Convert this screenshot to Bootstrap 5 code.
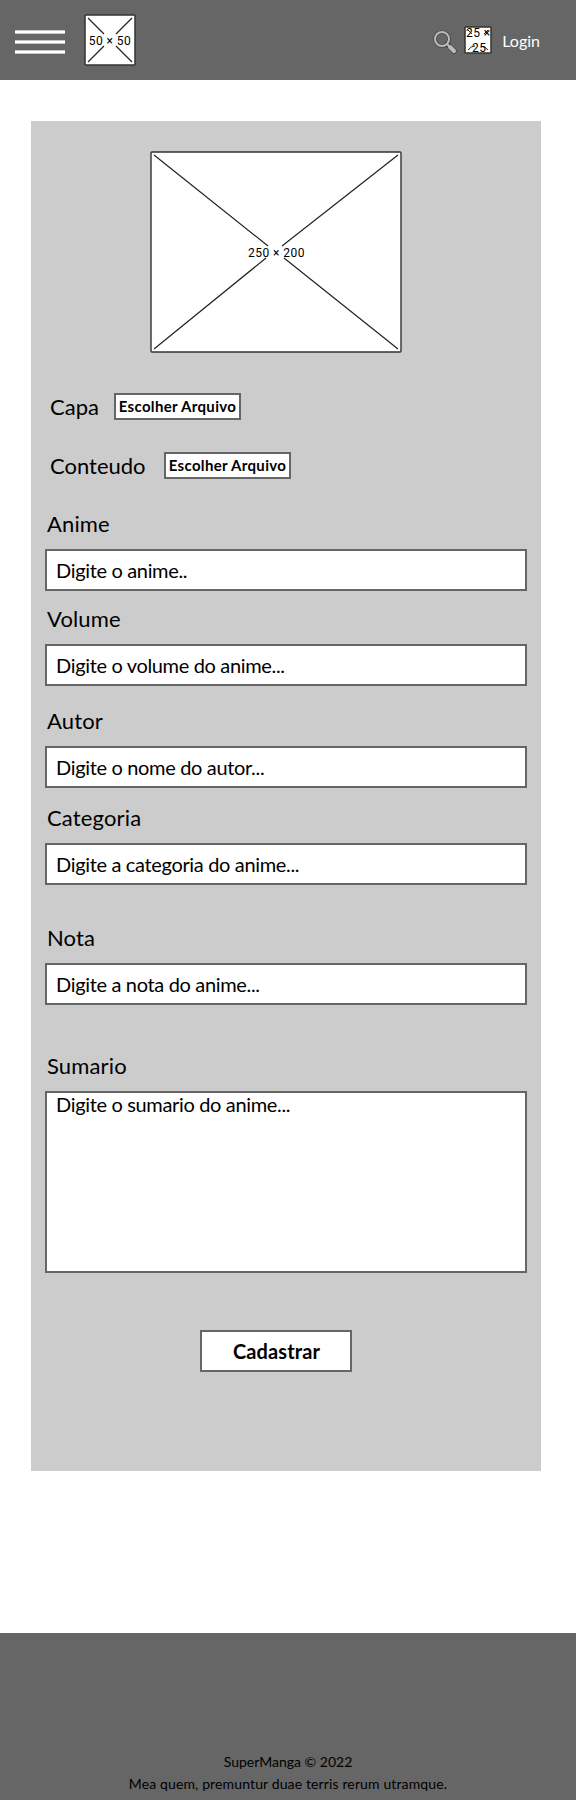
<!DOCTYPE html>
<html lang="pt-BR">
<head>
<meta charset="utf-8">
<meta name="viewport" content="width=device-width, initial-scale=1">
<title>SuperManga</title>
<link rel="stylesheet" href="https://cdn.jsdelivr.net/npm/bootstrap@5.3.0/dist/css/bootstrap.min.css">
<style>
body{font-family:Lato,"Liberation Sans",sans-serif;color:#000;background:#fff;height:1800px}
svg{display:block;flex:none}
svg text{font-family:Roboto,sans-serif;font-size:12px;letter-spacing:.45px}
.topbar{height:80px;background:#666;padding:0 36px 0 15px}
.burger{margin-top:4px}
.logo{margin-left:19px}
.search{margin-top:4px}
.avatar{margin-left:7px}
.login{font-size:16px;line-height:24px;color:#fff;margin:2px 0 0 10px;text-decoration:none}
.panel{width:510px;height:1350px;margin:41px 0 0 31px;background:#ccc;padding:30px 14px 0}
.cover{margin:0 0 40px 105px}
.filerow{height:27px;padding-left:5px}
.lbl{font-size:22px;line-height:28px;margin:0 0 11px 2px;display:block;letter-spacing:.15px}
.filerow .lbl{margin:0;letter-spacing:0;width:64px}
.filerow .lbl-wide{width:114px}
.filerow-last{margin:32px 0 31px}
.pick{width:127px;height:27px;border:2px solid #666;background:#fff;font-size:15px;letter-spacing:.32px;font-weight:700;line-height:23px;padding:0;text-align:center;color:#000;white-space:nowrap}
.field{height:42px;border:2px solid #666;border-radius:0;background:#fff;color:#000;font-size:20px;letter-spacing:-.34px;line-height:38px;padding:0 9px}
.field::placeholder{color:#000;opacity:1}
textarea.field{height:182px;line-height:22px;resize:none;padding-top:0}
.gap-a{margin-bottom:14px}.gap-b{margin-bottom:21px}.gap-c{margin-bottom:16px}.gap-d{margin-bottom:39px}.gap-e{margin-bottom:47px}
.send{width:152px;height:42px;border:2px solid #666;border-radius:0;background:#fff;font-size:20px;font-weight:700;line-height:38px;padding:0 0 0 1px;margin:57px 0 0 155px;color:#000;letter-spacing:.1px}
.foot{height:167px;margin-top:162px;background:#666;font-size:14px;line-height:22px;padding-bottom:5px}
.tagline{letter-spacing:.13px}
</style>
</head>
<body>
<header class="topbar d-flex align-items-center">
<svg class="burger" width="50" height="24" viewBox="0 0 50 24"><path d="M0 2h50M0 12h50M0 22h50" stroke="#b5b5b5" stroke-width="4"/><path d="M0 2h50M0 12h50M0 22h50" stroke="#fff" stroke-width="2.4"/></svg>
<svg class="logo" width="52" height="52" viewBox="0 0 52 52"><rect x="1" y="1" width="50" height="50" rx="1" fill="#fff" stroke="#333" stroke-width="1.5"/><path d="M4 4 20 20M32 20 48 4M4 48 20 32M32 32 48 48" stroke="#222" stroke-width="1.2"/><text x="26" y="31" text-anchor="middle">50 × 50</text></svg>
<svg class="search ms-auto" width="24" height="24" viewBox="0 0 24 24"><circle cx="9" cy="9" r="7" fill="none" stroke="#444" stroke-width="3.6"/><path d="m14 14 7 7" stroke="#444" stroke-width="5.4" stroke-linecap="round"/><circle cx="9" cy="9" r="7" fill="none" stroke="#bbb" stroke-width="2"/><path d="m14 14 3 3" stroke="#bbb" stroke-width="2"/><path d="m17 17 4 4" stroke="#bbb" stroke-width="4" stroke-linecap="round"/></svg>
<svg class="avatar" width="28" height="28" viewBox="0 0 28 28"><rect x="1" y="1" width="26" height="26" rx="1" fill="#fff" stroke="#333" stroke-width="1.5"/><path d="M4 4 8 8M24 4 20 8M4 24q3-4 7-4M24 24q-3-4-7-4" stroke="#222" fill="none"/><text x="2" y="11">25 ×</text><text x="8" y="26">25</text></svg>
<a class="login">Login</a>
</header>
<main class="panel">
<svg class="cover" width="252" height="202" viewBox="0 0 252 202"><rect x="1" y="1" width="250" height="200" rx="1" fill="#fff" stroke="#333" stroke-width="1.4"/><path d="M4 4 118 95M248 4 132 95M4 198 116 107M248 198 134 107" stroke="#222" stroke-width="1.2"/><text x="126.5" y="106" text-anchor="middle">250 × 200</text></svg>
<div class="filerow d-flex align-items-center"><span class="lbl">Capa</span><button class="pick">Escolher Arquivo</button></div>
<div class="filerow filerow-last d-flex align-items-center"><span class="lbl lbl-wide">Conteudo</span><button class="pick">Escolher Arquivo</button></div>
<label class="lbl">Anime</label><input class="field form-control gap-a" placeholder="Digite o anime..">
<label class="lbl">Volume</label><input class="field form-control gap-b" placeholder="Digite o volume do anime...">
<label class="lbl">Autor</label><input class="field form-control gap-c" placeholder="Digite o nome do autor...">
<label class="lbl">Categoria</label><input class="field form-control gap-d" placeholder="Digite a categoria do anime...">
<label class="lbl">Nota</label><input class="field form-control gap-e" placeholder="Digite a nota do anime...">
<label class="lbl">Sumario</label><textarea class="field form-control" placeholder="Digite o sumario do anime..."></textarea>
<button class="send btn">Cadastrar</button>
</main>
<footer class="foot d-flex flex-column justify-content-end align-items-center"><div>SuperManga © 2022</div><div class="tagline">Mea quem, premuntur duae terris rerum utramque.</div></footer>
<script src="https://cdn.jsdelivr.net/npm/bootstrap@5.3.0/dist/js/bootstrap.bundle.min.js"></script>
</body>
</html>
